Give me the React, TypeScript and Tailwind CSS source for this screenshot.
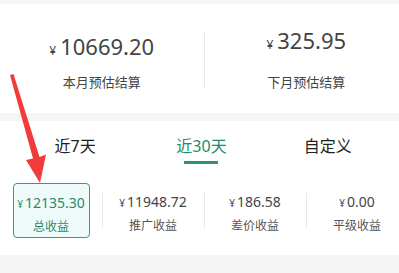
const font = { fontFamily: '"Noto Sans", "Noto Sans CJK SC", sans-serif' };

const stats = [
  { value: "12135.30", label: "总收益", active: true },
  { value: "11948.72", label: "推广收益" },
  { value: "186.58", label: "差价收益" },
  { value: "0.00", label: "平级收益" },
];

const tabs = ["近7天", "近30天", "自定义"];

export default function App() {
  return (
    <div
      className="relative w-[399px] h-[273px] overflow-hidden bg-[#f5f5f5] pt-[4px]"
      style={font}
    >
      {/* settlement card */}
      <div className="flex w-[408px] h-[109px] bg-white">
        <div className="flex flex-1 flex-col items-center pt-[28px]">
          <div className="flex items-baseline h-[28px] leading-[28px] text-[#444]">
            <span className="text-[12px] mr-[4px]">¥</span>
            <span className="text-[22px]">10669.20</span>
          </div>
          <div className="mt-[13px] text-[13px] leading-[18px] text-[#444]">本月预估结算</div>
        </div>
        <div className="self-start mt-[28px] h-[56px] w-px bg-[#e8e8e8]" />
        <div className="flex flex-1 flex-col items-center pt-[22px]">
          <div className="flex items-baseline h-[28px] leading-[28px] text-[#444]">
            <span className="text-[12px] mr-[4px]">¥</span>
            <span className="text-[22px]">325.95</span>
          </div>
          <div className="mt-[19px] text-[13px] leading-[18px] text-[#444]">下月预估结算</div>
        </div>
      </div>

      {/* income card */}
      <div className="mt-[8px] bg-white pb-[17px]">
        <div className="flex pl-[12px] pr-[8px] pt-[14px]">
          {tabs.map((t, i) => (
            <div key={t} className="flex flex-1 flex-col items-center">
              <span
                className={
                  "text-[16px] leading-[22px] " +
                  (i === 1 ? "text-[#1f8c68]" : "text-[#222]")
                }
              >
                {t}
              </span>
              <span
                className={
                  "mt-[4px] h-[3px] w-[34px] " + (i === 1 ? "bg-[#2a9474]" : "bg-transparent")
                }
              />
            </div>
          ))}
        </div>

        <div className="mt-[19px] grid w-[408px] grid-cols-4">
          {stats.map((s, i) => (
            <div key={s.label} className="relative flex justify-center">
              {i > 0 && (
                <div className="absolute left-0 top-[10px] h-[35px] w-px bg-[#e8e8e8]" />
              )}
              <div
                className={
                  "flex h-[55px] flex-col items-center pt-[10px] " +
                  (s.active
                    ? "w-[77px] rounded-[4px] border border-[#3b9a7f] bg-[#effbfa]"
                    : "w-[90px]")
                }
              >
                <div
                  className={
                    "flex items-baseline leading-[18px] " +
                    (s.active ? "text-[#2b8a6b]" : "text-[#444]")
                  }
                >
                  <span className="text-[10px] mr-[2px]">¥</span>
                  <span className="text-[14px]">{s.value}</span>
                </div>
                <div
                  className={
                    "mt-[6px] text-[12px] leading-[16px] " +
                    (s.active ? "text-[#2b8a6b]" : "text-[#555]")
                  }
                >
                  {s.label}
                </div>
              </div>
            </div>
          ))}
        </div>
      </div>

      {/* red arrow annotation */}
      <svg
        className="absolute left-0 top-0"
        width="60"
        height="190"
        viewBox="0 0 60 190"
      >
        <polygon
          points="10,75 13.5,74 39.5,157 46,154.5 40,183 26,160 33,158.5"
          fill="#f23b3b"
        />
      </svg>
    </div>
  );
}
